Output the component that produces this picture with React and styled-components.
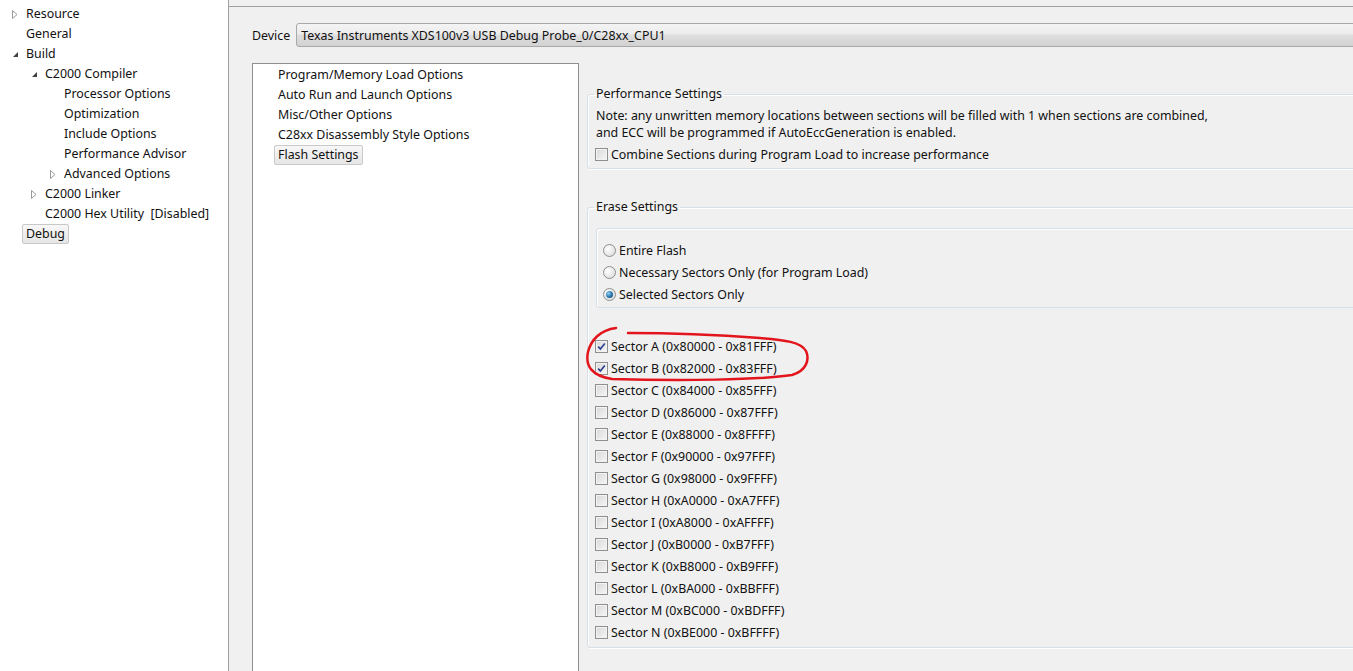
import React from 'react'
import styled, { createGlobalStyle } from 'styled-components'

const GlobalStyle = createGlobalStyle`
  html, body {
    margin: 0;
    padding: 0;
    background: #f0f0f0;
  }
  body {
    font-family: "Noto Sans", "Open Sans", sans-serif;
    font-size: 12.4px;
    color: #111;
  }
`

const Window = styled.div`
  position: relative;
  display: flex;
  width: 1353px;
  height: 671px;
  overflow: hidden;
`

const TreePane = styled.div`
  width: 228px;
  flex: none;
  background: #ffffff;
  border-right: 1px solid #a0a0a0;
  padding-top: 4px;
  box-sizing: content-box;
`

const TreeRow = styled.div`
  display: flex;
  align-items: center;
  height: 20px;
  padding-left: ${props => 6 + props.level * 19}px;
  white-space: nowrap;
`

const Toggle = styled.span`
  width: 16px;
  height: 20px;
  flex: none;
  display: flex;
  align-items: center;
  padding-left: 6px;
  box-sizing: border-box;
`

const Label = styled.span`
  display: inline-block;
  height: 18px;
  line-height: 18px;
  padding: 0 3px;
  border: 1px solid ${props => props.selected ? '#c9c9c9' : 'transparent'};
  border-radius: 2px;
  background: ${props => props.selected ? 'linear-gradient(#f7f7f7, #e6e6e6)' : 'none'};
`

const MainPane = styled.div`
  flex: 1;
  min-width: 0;
  display: flex;
  flex-direction: column;
  background: #f0f0f0;
`

const TopBar = styled.div`
  height: 6px;
  border-bottom: 1px solid #a0a0a0;
  flex: none;
`

const DeviceRow = styled.div`
  display: flex;
  align-items: center;
  gap: 6px;
  margin-top: 16px;
  padding-left: 23px;
`

const Combo = styled.div`
  flex: none;
  width: 1100px;
  height: 24px;
  box-sizing: border-box;
  border: 1px solid #a8a8a8;
  border-radius: 3px;
  background: linear-gradient(#f4f4f4 0%, #ececec 45%, #dedede 50%, #d2d2d2 100%);
  display: flex;
  align-items: center;
  padding-left: 4px;
`

const Content = styled.div`
  flex: 1;
  display: flex;
  gap: 8px;
  margin-top: 16px;
  padding-left: 23px;
`

const ListBox = styled.div`
  width: 327px;
  flex: none;
  box-sizing: border-box;
  background: #ffffff;
  border: 1px solid #8f8f8f;
  border-bottom: none;
  padding-top: 1px;
`

const ListItem = styled.div`
  height: 20px;
  display: flex;
  align-items: center;
  padding-left: 21px;
  white-space: nowrap;
`

const RightColumn = styled.div`
  flex: none;
  width: 800px;
  padding-top: 23px;
`

const Group = styled.fieldset`
  margin: 0 0 30px 0;
  padding: ${props => props.pad};
  border: 1px solid #d5dfe5;
  border-radius: 3px;
  box-shadow: inset 1px 1px 0 #ffffff, 1px 1px 0 #ffffff;
`

const Legend = styled.legend`
  padding: 0 2px;
  margin-left: -1px;
  line-height: 16px;
`

const Note = styled.div`
  line-height: 17px;
  padding-left: 1px;
`

const InnerBox = styled.div`
  margin: 13px 0 27px 1px;
  border: 1px solid #d5dfe5;
  border-radius: 3px;
  box-shadow: inset 1px 1px 0 #ffffff;
  padding: 10px 0 2px 6px;
`

const OptionRow = styled.div`
  display: flex;
  align-items: center;
  height: 22px;
  gap: 3px;
  margin-top: ${props => props.top || 0}px;
  white-space: nowrap;
`

const Box = styled.span`
  width: 13px;
  height: 13px;
  flex: none;
  box-sizing: border-box;
  border: 1px solid #8e8f8f;
  background: linear-gradient(135deg, #d8d8d8, #f6f6f6);
  box-shadow: inset 0 0 0 1px #f3f3f3;
  display: flex;
  align-items: center;
  justify-content: center;
`

const Radio = styled.span`
  width: 13px;
  height: 13px;
  flex: none;
  box-sizing: border-box;
  border-radius: 50%;
  border: 1px solid #8e8f8f;
  background: radial-gradient(circle at 35% 35%, #ffffff, #d6d6d6);
  display: flex;
  align-items: center;
  justify-content: center;

  &::after {
    content: '';
    display: ${props => props.checked ? 'block' : 'none'};
    width: 7px;
    height: 7px;
    border-radius: 50%;
    background: radial-gradient(circle at 35% 35%, #8fd0f4, #1f6aa3 60%, #0f3f6c);
  }
`

const Annotation = styled.svg`
  position: absolute;
  left: 0;
  top: 0;
  pointer-events: none;
`

function Arrow({ open }) {
  if (open) {
    return (
      <svg width="7" height="7" viewBox="0 0 7 7">
        <path d="M6 1 L6 6 L1 6 Z" fill="#404040" />
      </svg>
    )
  }
  return (
    <svg width="6" height="9" viewBox="0 0 6 9">
      <path d="M0.5 0.5 L5 4.5 L0.5 8.5 Z" fill="#fff" stroke="#9a9a9a" strokeWidth="1" />
    </svg>
  )
}

function CheckBox({ checked }) {
  return (
    <Box>
      {checked && (
        <svg width="9" height="9" viewBox="0 0 9 9">
          <path d="M1.2 4.6 L3.4 7 L7.8 1.4" fill="none" stroke="#2a3f8e" strokeWidth="1.6" />
        </svg>
      )}
    </Box>
  )
}

const tree = [
  { level: 0, text: 'Resource', toggle: 'closed' },
  { level: 0, text: 'General' },
  { level: 0, text: 'Build', toggle: 'open' },
  { level: 1, text: 'C2000 Compiler', toggle: 'open' },
  { level: 2, text: 'Processor Options' },
  { level: 2, text: 'Optimization' },
  { level: 2, text: 'Include Options' },
  { level: 2, text: 'Performance Advisor' },
  { level: 2, text: 'Advanced Options', toggle: 'closed' },
  { level: 1, text: 'C2000 Linker', toggle: 'closed' },
  { level: 1, text: 'C2000 Hex Utility  [Disabled]' },
  { level: 0, text: 'Debug', selected: true },
]

const pages = [
  'Program/Memory Load Options',
  'Auto Run and Launch Options',
  'Misc/Other Options',
  'C28xx Disassembly Style Options',
]

const sectors = [
  ['A', '0x80000', '0x81FFF', true],
  ['B', '0x82000', '0x83FFF', true],
  ['C', '0x84000', '0x85FFF'],
  ['D', '0x86000', '0x87FFF'],
  ['E', '0x88000', '0x8FFFF'],
  ['F', '0x90000', '0x97FFF'],
  ['G', '0x98000', '0x9FFFF'],
  ['H', '0xA0000', '0xA7FFF'],
  ['I', '0xA8000', '0xAFFFF'],
  ['J', '0xB0000', '0xB7FFF'],
  ['K', '0xB8000', '0xB9FFF'],
  ['L', '0xBA000', '0xBBFFF'],
  ['M', '0xBC000', '0xBDFFF'],
  ['N', '0xBE000', '0xBFFFF'],
]

export default function App() {
  return (
    <Window>
      <GlobalStyle />
      <TreePane>
        {tree.map(item => (
          <TreeRow key={item.text} level={item.level}>
            <Toggle>{item.toggle && <Arrow open={item.toggle === 'open'} />}</Toggle>
            <Label selected={item.selected}>{item.text.replace('  ', '\u00a0\u00a0')}</Label>
          </TreeRow>
        ))}
      </TreePane>
      <MainPane>
        <TopBar />
        <DeviceRow>
          <span>Device</span>
          <Combo>Texas Instruments XDS100v3 USB Debug Probe_0/C28xx_CPU1</Combo>
        </DeviceRow>
        <Content>
          <ListBox>
            {pages.map(p => (
              <ListItem key={p}><Label>{p}</Label></ListItem>
            ))}
            <ListItem><Label selected>Flash Settings</Label></ListItem>
          </ListBox>
          <RightColumn>
            <Group pad="5px 8px 3px 7px">
              <Legend>Performance Settings</Legend>
              <Note>
                Note: any unwritten memory locations between sections will be filled with 1 when sections are combined,
                <br />
                and ECC will be programmed if AutoEccGeneration is enabled.
              </Note>
              <OptionRow top={2}>
                <CheckBox />
                <span>Combine Sections during Program Load to increase performance</span>
              </OptionRow>
            </Group>
            <Group pad="0 8px 4px 7px">
              <Legend>Erase Settings</Legend>
              <InnerBox>
                <OptionRow>
                  <Radio />
                  <span>Entire Flash</span>
                </OptionRow>
                <OptionRow>
                  <Radio />
                  <span>Necessary Sectors Only (for Program Load)</span>
                </OptionRow>
                <OptionRow>
                  <Radio checked />
                  <span>Selected Sectors Only</span>
                </OptionRow>
              </InnerBox>
              {sectors.map(([name, from, to, checked]) => (
                <OptionRow key={name}>
                  <CheckBox checked={checked} />
                  <span>Sector {name} ({from} - {to})</span>
                </OptionRow>
              ))}
            </Group>
          </RightColumn>
        </Content>
      </MainPane>
      <Annotation width="1353" height="671" viewBox="0 0 1353 671">
        <path
          d="M616 328 C600 330, 591 340, 588 352 C585 366, 592 376, 612 379 C680 381, 760 380, 792 375 C806 371, 810 360, 806 351 C801 342, 785 340, 760 338 C720 335, 670 333, 628 333"
          fill="none"
          stroke="#e3151c"
          strokeWidth="2.5"
          strokeLinecap="round"
        />
      </Annotation>
    </Window>
  )
}
